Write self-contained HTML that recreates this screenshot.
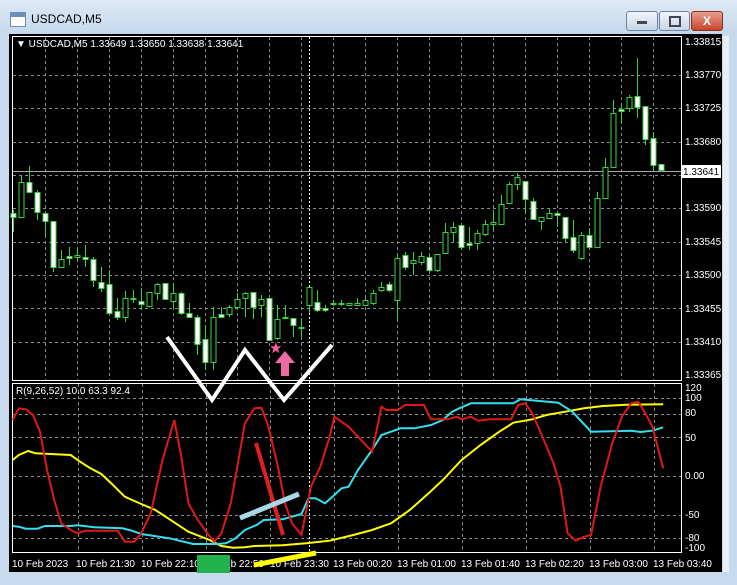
<!DOCTYPE html>
<html><head><meta charset="utf-8"><style>
*{margin:0;padding:0}
body{width:737px;height:585px;overflow:hidden;background:#c8dbee;font-family:"Liberation Sans",sans-serif;position:relative}
#title{position:absolute;left:0;top:0;width:737px;height:34px;background:linear-gradient(#dde9f5,#c5d8ec)}
.btn{position:absolute;top:11px;height:18px;border:1px solid #6d83a0;border-radius:3px;background:linear-gradient(#f0f5fb,#c8d6e6)}
svg text{font-family:"Liberation Sans",sans-serif;font-size:10px;fill:#fff}
</style></head><body>
<div id="title">
 <div style="position:absolute;left:10px;top:12px;width:14px;height:13px;background:#fff;border:1px solid #6b8fb5"><div style="height:4px;background:#6b8fb5"></div></div>
 <div style="position:absolute;left:31px;top:12px;font-size:12px;color:#000">USDCAD,M5</div>
 <div class="btn" style="left:626px;width:30px"><div style="position:absolute;left:10px;top:9px;width:10px;height:3px;background:#445"></div></div>
 <div class="btn" style="left:659px;width:29px"><div style="position:absolute;left:9px;top:4px;width:8px;height:7px;border:2px solid #445"></div></div>
 <div class="btn" style="left:691px;width:30px;background:linear-gradient(#e8a090,#c8452f);border-color:#8a3020;color:#fff;font-weight:bold;font-size:12px;text-align:center;line-height:18px">X</div>
</div>
<svg id="s" width="737" height="585" style="position:absolute;left:0;top:0">
<rect x="9" y="34" width="713" height="538" fill="#000"/>
<rect x="723" y="36" width="6" height="536" fill="#e8eef5"/>
<g id="grid" stroke="#8a8a8a" stroke-dasharray="3,3" stroke-width="1"></g>
<rect x="12.5" y="36.5" width="669" height="344" fill="none" stroke="#fff"/>
<rect x="12.5" y="383.5" width="669" height="169" fill="none" stroke="#fff"/>
<line x1="309.5" y1="37" x2="309.5" y2="552" stroke="#fff" stroke-dasharray="2,2"/>
<line x1="13" y1="171.5" x2="681" y2="171.5" stroke="#aaa"/>
<g id="c"></g>
<g id="ind" fill="none" stroke-width="2"></g>
<g id="lbl"></g>
<rect x="681" y="165" width="40" height="13" fill="#fff"/>
<text x="683" y="175" style="fill:#000">1.33641</text>
<text x="16" y="47">▼ USDCAD,M5  1.33649 1.33650 1.33638 1.33641</text>
<text x="16" y="394">R(9,26,52) 10.0 63.3 92.4</text>
<rect x="197" y="555" width="33" height="18" fill="#22b14c"/>
<polyline points="167,337 212,400 245,350 284,400 332,345" fill="none" stroke="#fff" stroke-width="4"/>
<text x="269" y="353" style="fill:#ff5fa8;font-size:15px">★</text>
<path d="M285,351 L295,363 L289,363 L289,376 L281,376 L281,363 L275,363 Z" fill="#f06aa8"/>
<line x1="256" y1="443" x2="283" y2="535" stroke="#e02020" stroke-width="4"/>
<line x1="240" y1="518" x2="299" y2="494" stroke="#a8d8e8" stroke-width="5"/>
<line x1="254" y1="565" x2="316" y2="553" stroke="#ffff00" stroke-width="5"/>
</svg>
<script>
const NS="http://www.w3.org/2000/svg";
function el(p,t,a,txt){const e=document.createElementNS(NS,t);for(const k in a)e.setAttribute(k,a[k]);if(txt)e.textContent=txt;document.getElementById(p).appendChild(e);}
// grid
[75,108,142,175,208,242,275,308,342].forEach(y=>el("grid","line",{x1:13,x2:681,y1:y+.5,y2:y+.5}));
for(let x=45;x<681;x+=32)if(x!=309)el("grid","line",{x1:x+.5,x2:x+.5,y1:37,y2:380});
[398,414,437,476,515,538].forEach(y=>el("grid","line",{x1:13,x2:681,y1:y+.5,y2:y+.5}));
for(let x=78;x<681;x+=64)el("grid","line",{x1:x+.5,x2:x+.5,y1:384,y2:552});
// price labels
[["1.33815",45],["1.33770",78],["1.33725",111],["1.33680",145],["1.33590",211],["1.33545",245],["1.33500",278],["1.33455",312],["1.33410",345],["1.33365",378]].forEach(a=>el("lbl","text",{x:685,y:a[1]},a[0]));
[["120",391],["100",401],["80",416],["50",441],["0.00",479],["-50",518],["-80",541],["-100",551]].forEach(a=>el("lbl","text",{x:685,y:a[1]},a[0]));
[["10 Feb 2023",12],["10 Feb 21:30",76],["10 Feb 22:10",141],["10 Feb 22:50",205],["10 Feb 23:30",270],["13 Feb 00:20",333],["13 Feb 01:00",397],["13 Feb 01:40",461],["13 Feb 02:20",525],["13 Feb 03:00",589],["13 Feb 03:40",653]].forEach(a=>el("lbl","text",{x:a[1],y:567},a[0]));
// candles [top,bot,wtop,wbot,filled]
const C=[[213,217,210,232,1],[182,217,175,217,0],[182,192,166,192,1],[192,212,190,220,1],[213,221,213,237,1],[221,267,221,272,1],[259,267,250,267,0],[256,258,247,265,1],[255,257,247,262,0],[257,259,245,267,1],
[259,280,257,287,1],[282,288,267,292,1],[284,313,270,313,1],[311,317,298,320,1],[298,317,291,322,0],[298,299,290,303,1],[301,304,288,310,1],[292,306,292,306,0],[284,293,283,300,0],[283,299,283,299,1],
[293,301,283,307,0],[293,313,292,315,1],[313,317,303,318,1],[317,344,315,355,1],[339,362,325,370,1],[317,362,307,370,0],[314,317,307,318,1],[307,314,305,317,0],[299,307,293,310,0],[293,298,292,317,0],
[292,307,292,319,1],[299,305,295,317,0],[298,340,298,340,1],[319,338,305,340,0],[317,318,305,318,1],[318,325,318,337,1],[327,328,318,337,1],[287,305,287,313,0],[302,310,290,312,1],[308,310,305,312,1],
[303,304,300,306,1],[303,304,300,306,1],[303,305,303,305,0],[303,305,298,305,0],[300,305,298,305,0],[293,303,290,305,0],[287,290,282,292,0],[284,290,282,292,1],[258,300,254,320,0],[255,267,252,270,1],
[260,263,252,275,0],[256,262,252,265,0],[257,270,255,272,1],[254,270,254,272,0],[232,253,223,254,0],[227,232,222,242,0],[225,247,225,250,1],[243,245,227,250,1],[233,243,230,250,0],[224,234,220,236,0],
[222,224,210,230,0],[204,224,195,224,0],[184,203,182,203,0],[177,184,173,190,0],[181,199,181,212,1],[201,219,198,219,1],[217,221,217,230,0],[213,218,208,219,0],[213,215,213,227,1],[217,238,217,243,1],
[237,250,220,253,1],[235,258,232,260,0],[235,247,228,248,1],[198,247,192,247,0],[167,198,158,198,0],[113,167,100,167,0],[109,111,105,123,1],[97,108,95,112,0],[96,107,58,118,1],[106,139,106,145,1],
[138,165,132,170,1],[164,170,164,172,1]];
C.forEach((c,i)=>{const x=13+8*i;el("c","line",{x1:x+.5,x2:x+.5,y1:c[2],y2:c[3],stroke:"#3ad23a"});
el("c","rect",{x:x-2,y:c[0]+.5,width:5,height:Math.max(1,c[1]-c[0]),fill:c[4]?"#fff":"#000",stroke:"#3ad23a","stroke-width":1});});
// indicator
function pl(pts,col){el("ind","polyline",{points:pts.map(p=>(p[0]/2.123).toFixed(1)+","+(370+p[1]/3).toFixed(1)).join(" "),stroke:col});}
pl([[27,270],[40,255],[60,243],[75,250],[150,255],[170,275],[190,293],[215,312],[240,345],[265,380],[300,402],[330,420],[360,448],[400,485],[445,510],[470,528],[495,533],[520,532],[540,528],[600,526],[650,520],[700,512],[750,495],[790,480],[830,460],[870,420],[910,370],[940,330],[980,270],[1020,225],[1060,185],[1090,158],[1130,148],[1160,135],[1200,125],[1240,115],[1280,108],[1330,104],[1408,103]],"#ffff00");
pl([[27,468],[40,470],[55,476],[80,476],[95,468],[150,468],[165,466],[200,472],[260,475],[280,482],[300,492],[360,505],[410,522],[460,522],[480,520],[500,505],[520,480],[545,465],[560,450],[600,448],[640,432],[655,385],[670,385],[690,400],[710,375],[725,355],[740,350],[760,300],[790,240],[810,195],[830,185],[850,175],[880,175],[915,165],[940,150],[960,125],[975,115],[1000,100],[1090,100],[1105,88],[1140,92],[1185,98],[1215,125],[1255,185],[1340,182],[1360,186],[1385,182],[1408,172]],"#33e0f0");
pl([[27,150],[40,115],[55,118],[70,135],[85,185],[100,300],[115,390],[130,460],[150,480],[165,490],[180,482],[250,482],[265,515],[285,515],[300,490],[320,430],[345,270],[370,150],[385,260],[400,400],[420,450],[440,490],[455,515],[470,490],[490,400],[505,280],[520,160],[540,115],[555,113],[570,170],[590,290],[605,400],[620,460],[640,495],[660,350],[680,290],[700,200],[710,140],[740,170],[760,200],[790,245],[810,110],[820,120],[845,120],[860,105],[900,105],[915,148],[950,148],[970,140],[980,148],[1000,140],[1015,152],[1040,148],[1085,148],[1100,105],[1115,100],[1130,130],[1150,195],[1175,280],[1190,350],[1205,490],[1222,512],[1240,500],[1255,495],[1275,350],[1300,220],[1320,140],[1340,100],[1355,95],[1370,130],[1385,170],[1408,295]],"#e01818");
</script>
</body></html>
